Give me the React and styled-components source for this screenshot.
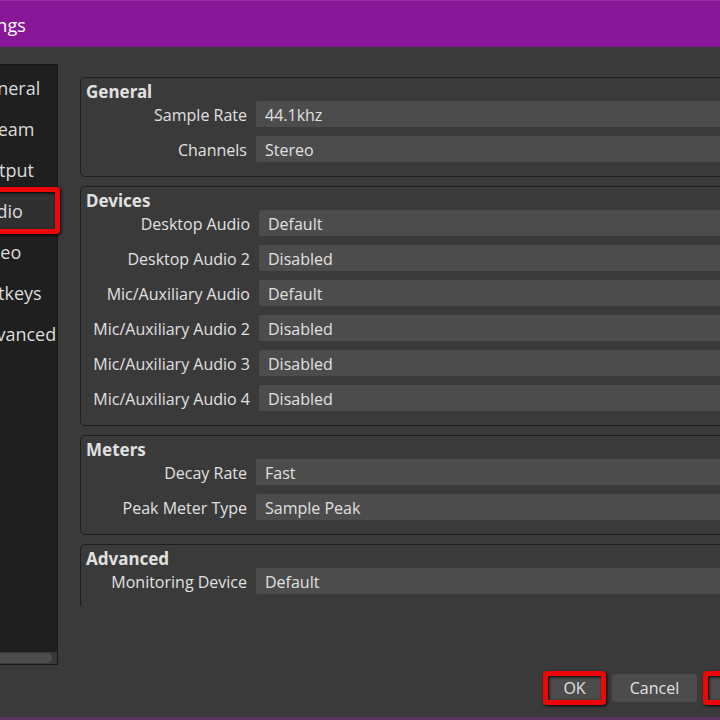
import React from "react";
import styled, { createGlobalStyle, css } from "styled-components";

const GlobalStyle = createGlobalStyle`
  * {
    box-sizing: border-box;
  }
  body {
    margin: 0;
    background: #3a3a3a;
  }
`;

// the dialog is wider than the page, both sides run off the edge
const Page = styled.div`
  overflow: hidden;
  min-height: 100vh;
  display: flex;
  flex-direction: column;
`;

const Dialog = styled.div`
  flex: 1;
  display: flex;
  flex-direction: column;
  margin: 0 -88px 0 -48px;
  background: #3a3a3a;
  border-bottom: 3px solid #5a3460;
  color: #e1e0e1;
  font-family: "Open Sans", "Noto Sans", sans-serif;
  font-size: 16px;
`;

const TitleBar = styled.header`
  height: 47px;
  padding: 2px 0 0 7px;
  display: flex;
  align-items: center;
  background: #881798;
  border-top: 1px solid #93309f;
  color: #fff;
`;

const Title = styled.h1`
  margin: 0;
  font-size: 18px;
  font-weight: 400;
`;

const Body = styled.div`
  flex: 1;
  display: flex;
  gap: 22px;
  padding-top: 17px;
`;

const Sidebar = styled.nav`
  width: 106px;
  height: 601px;
  display: flex;
  flex-direction: column;
  justify-content: space-between;
  background: #1f1f1f;
  border: 1px solid #191919;
`;

const NavList = styled.ul`
  margin: 0;
  padding: 2px 0 0;
  list-style: none;
`;

const ring = css`
  position: relative;
  &::after {
    content: "";
    position: absolute;
    inset: -4px;
    border: 5px solid #ef0606;
    border-radius: 4px;
    box-shadow: 1px 1px 3px #000, inset 1px 1px 3px #000;
    pointer-events: none;
  }
`;

const NavButton = styled.button`
  display: block;
  width: 100%;
  height: 41px;
  padding: 0 0 0 21px;
  border: 0;
  background: ${(props) => (props.$active ? "#303030" : "transparent")};
  color: #dcdcdc;
  font-family: inherit;
  font-size: 18px;
  line-height: 24px;
  text-align: left;
  white-space: nowrap;
  ${(props) => props.$active && ring}
  &::after {
    inset: -3px;
  }
`;

const ScrollTrack = styled.div`
  height: 12px;
  padding: 1px 5px 1px 0;
  background: #393939;
`;

const ScrollThumb = styled.div`
  height: 10px;
  border-radius: 5px;
  background: #4d4d4d;
`;

const Content = styled.div`
  flex: 1;
  display: flex;
  flex-direction: column;
`;

const Groups = styled.main`
  height: 542px;
  overflow: hidden;
  display: flex;
  flex-direction: column;
  gap: 9px;
  padding-top: 13px;
`;

const Group = styled.section`
  flex: none;
  padding: 4px 12px 14px 5px;
  border: 1px solid #1f1f1f;
  border-radius: 5px;
`;

const GroupTitle = styled.h2`
  margin: 0;
  font-family: "Noto Sans", sans-serif;
  font-size: 17px;
  line-height: 19px;
  font-weight: 700;
`;

const Rows = styled.div`
  display: grid;
  grid-template-columns: ${(props) => props.$labelWidth}px 1fr;
  column-gap: 9px;
  row-gap: 9px;
`;

const Label = styled.label`
  height: 26px;
  line-height: 28px;
  text-align: right;
  white-space: nowrap;
`;

const Select = styled.select`
  appearance: none;
  width: 100%;
  height: 26px;
  padding: 2px 9px 0;
  border: 0;
  border-radius: 2px;
  background: #4c4c4c;
  color: inherit;
  font: inherit;
  line-height: 24px;
`;

const Footer = styled.footer`
  display: flex;
  align-items: center;
  justify-content: flex-end;
  gap: 10px;
  padding: 0 16px 15px 0;
  margin-top: auto;
`;

const Button = styled.button`
  width: ${(props) => (props.$small ? 55 : 85)}px;
  height: ${(props) => (props.$marked ? 26 : 28)}px;
  padding: 0;
  border: 0;
  border-radius: 3px;
  background: #4c4c4c;
  color: inherit;
  font: inherit;
  ${(props) => props.$marked && ring}
`;

const pages = ["General", "Stream", "Output", "Audio", "Video", "Hotkeys", "Advanced"];

const groups = [
  {
    title: "General",
    labelWidth: 161,
    rows: [
      ["Sample Rate", "44.1khz"],
      ["Channels", "Stereo"],
    ],
  },
  {
    title: "Devices",
    labelWidth: 164,
    rows: [
      ["Desktop Audio", "Default"],
      ["Desktop Audio 2", "Disabled"],
      ["Mic/Auxiliary Audio", "Default"],
      ["Mic/Auxiliary Audio 2", "Disabled"],
      ["Mic/Auxiliary Audio 3", "Disabled"],
      ["Mic/Auxiliary Audio 4", "Disabled"],
    ],
  },
  {
    title: "Meters",
    labelWidth: 161,
    rows: [
      ["Decay Rate", "Fast"],
      ["Peak Meter Type", "Sample Peak"],
    ],
  },
  {
    title: "Advanced",
    labelWidth: 161,
    rows: [["Monitoring Device", "Default"]],
  },
];

const toId = (label) => label.toLowerCase().replace(/[^a-z0-9]+/g, "-");

const SettingsGroup = ({ title, labelWidth, rows }) => (
  <Group>
    <GroupTitle>{title}</GroupTitle>
    <Rows $labelWidth={labelWidth}>
      {rows.map(([label, value]) => (
        <React.Fragment key={label}>
          <Label htmlFor={toId(label)}>{label}</Label>
          <Select id={toId(label)} defaultValue={value}>
            <option>{value}</option>
          </Select>
        </React.Fragment>
      ))}
    </Rows>
  </Group>
);

const App = () => {
  return (
    <Page>
      <GlobalStyle />
      <Dialog>
        <TitleBar>
          <Title>Settings</Title>
        </TitleBar>
        <Body>
          <Sidebar>
            <NavList>
              {pages.map((page) => (
                <li key={page}>
                  <NavButton type="button" $active={page === "Audio"}>
                    {page}
                  </NavButton>
                </li>
              ))}
            </NavList>
            <ScrollTrack>
              <ScrollThumb />
            </ScrollTrack>
          </Sidebar>
          <Content>
            <Groups>
              {groups.map((group) => (
                <SettingsGroup key={group.title} {...group} />
              ))}
            </Groups>
            <Footer>
              <Button type="button" $small $marked>OK</Button>
              <Button type="button">Cancel</Button>
              <Button type="button" $marked>Apply</Button>
            </Footer>
          </Content>
        </Body>
      </Dialog>
    </Page>
  );
};

export default App;
